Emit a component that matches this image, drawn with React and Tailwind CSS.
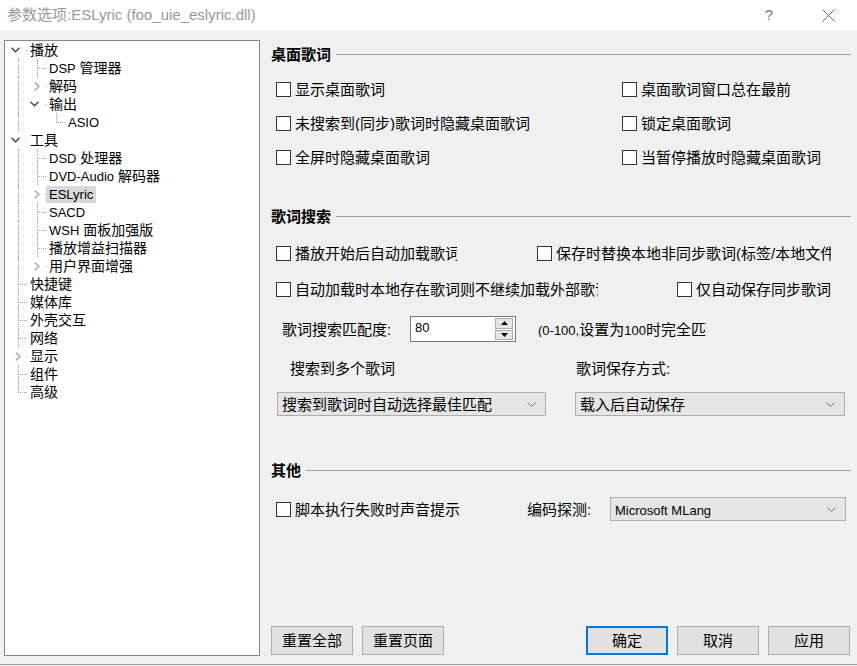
const L = ({ children }) => <span className="text-[13px]">{children}</span>;

const tree = [
  { label: '播放', level: 0, exp: 'open', anc: [], first: true },
  { label: <><L>DSP</L> 管理器</>, level: 1, anc: [true] },
  { label: '解码', level: 1, exp: 'closed', anc: [true] },
  { label: '输出', level: 1, exp: 'open', anc: [true], last: true },
  { label: <L>ASIO</L>, level: 2, anc: [true, false], last: true },
  { label: '工具', level: 0, exp: 'open', anc: [] },
  { label: <><L>DSD</L> 处理器</>, level: 1, anc: [true] },
  { label: <><L>DVD-Audio</L> 解码器</>, level: 1, anc: [true] },
  { label: <L>ESLyric</L>, level: 1, exp: 'closed', anc: [true], selected: true },
  { label: <L>SACD</L>, level: 1, anc: [true] },
  { label: <><L>WSH</L> 面板加强版</>, level: 1, anc: [true] },
  { label: '播放增益扫描器', level: 1, anc: [true] },
  { label: '用户界面增强', level: 1, exp: 'closed', anc: [true], last: true },
  { label: '快捷键', level: 0, anc: [] },
  { label: '媒体库', level: 0, anc: [] },
  { label: '外壳交互', level: 0, anc: [] },
  { label: '网络', level: 0, anc: [] },
  { label: '显示', level: 0, exp: 'closed', anc: [] },
  { label: '组件', level: 0, anc: [] },
  { label: '高级', level: 0, anc: [], last: true },
];

function TreeRow({ item }) {
  return (
    <div className="flex h-[18px] items-center">
      {item.anc.map((cont, i) => (
        <div key={i} className="relative h-full w-[19px] shrink-0">
          {cont && <div className="absolute left-[13px] top-0 h-full border-l border-dotted border-[#a0a0a0]" />}
        </div>
      ))}
      <div className="relative h-full w-[22px] shrink-0">
        {!item.first && <div className="absolute left-[13px] top-0 h-1/2 border-l border-dotted border-[#a0a0a0]" />}
        {!item.last && <div className="absolute left-[13px] top-1/2 h-1/2 border-l border-dotted border-[#a0a0a0]" />}
        <div className="absolute left-[13px] top-1/2 w-[9px] border-t border-dotted border-[#a0a0a0]" />
        {item.exp && (
          <div className="absolute left-[4px] top-0 flex h-full w-[16px] items-center justify-center bg-white">
            {item.exp === 'open' ? (
              <svg width="9" height="6" viewBox="0 0 9 6" className="-ml-[3px]">
                <polyline points="0.5,0.8 4.5,4.8 8.5,0.8" fill="none" stroke="#404040" strokeWidth="1.3" />
              </svg>
            ) : (
              <svg width="6" height="9" viewBox="0 0 6 9" className="ml-[2px]">
                <polyline points="0.8,0.5 4.8,4.5 0.8,8.5" fill="none" stroke="#a8a8a8" strokeWidth="1.5" />
              </svg>
            )}
          </div>
        )}
      </div>
      <div className={`flex h-[17px] items-center px-[3px] ${item.selected ? 'bg-[#d9d9d9]' : ''}`}>
        <span className="whitespace-pre text-[14px] leading-none text-black">{item.label}</span>
      </div>
    </div>
  );
}

function Section({ title }) {
  return (
    <div className="flex h-[18px] items-center">
      <span className="text-[15px] font-bold leading-none">{title}</span>
      <div className="ml-[5px] h-px flex-1 bg-[#a0a0a0]" />
    </div>
  );
}

function Check({ children, className = '' }) {
  return (
    <div className={`flex items-center overflow-hidden whitespace-nowrap ${className}`}>
      <div className="h-[15px] w-[15px] shrink-0 border border-[#333] bg-white" />
      <span className="ml-[4px] text-[15px] leading-none">{children}</span>
    </div>
  );
}

function Select({ className, children }) {
  return (
    <div className={`flex h-[24px] items-center border border-[#adadad] bg-[#e5e5e5] pl-[4px] pr-[9px] ${className}`}>
      <span className="flex-1 whitespace-nowrap text-[15px] leading-none">{children}</span>
      <svg width="9" height="5" viewBox="0 0 9 5">
        <polyline points="0.5,0.5 4.5,4.5 8.5,0.5" fill="none" stroke="#707070" strokeWidth="1" />
      </svg>
    </div>
  );
}

function Btn({ children, primary, className = '' }) {
  return (
    <div
      className={`flex h-[29px] w-[82px] items-center justify-center bg-[#e1e1e1] text-[15px] leading-none ${
        primary ? 'border-2 border-[#0078d7]' : 'border border-[#adadad]'
      } ${className}`}
    >
      {children}
    </div>
  );
}

export default function App() {
  return (
    <div className="flex h-[666px] w-[857px] flex-col overflow-hidden bg-[#f0f0f0] font-['Liberation_Sans','Noto_Sans_CJK_SC',sans-serif] text-black">
      <div className="flex h-[31px] shrink-0 items-center bg-white">
        <span className="pl-[7px] text-[15px] text-[#999]">参数选项:ESLyric (foo_uie_eslyric.dll)</span>
        <span className="ml-auto w-[20px] text-center text-[15px] text-[#777]">?</span>
        <div className="ml-[39px] mr-[19px] flex w-[20px] justify-center">
          <svg width="13" height="13" viewBox="0 0 13 13">
            <path d="M0.5 0.5 L12.5 12.5 M12.5 0.5 L0.5 12.5" stroke="#666" strokeWidth="1" />
          </svg>
        </div>
      </div>

      <div className="flex h-[633px] shrink-0">
        <div className="pl-[4px] pt-[9px]">
          <div className="h-[616px] w-[256px] border border-[#828790] bg-white">
            {tree.map((item, i) => (
              <TreeRow key={i} item={item} />
            ))}
          </div>
        </div>

        <div className="ml-[11px] flex w-[580px] flex-col pb-[9px]">
          <div className="mt-[14px]">
            <Section title="桌面歌词" />
          </div>
          <div className="mt-[16px] flex h-[20px] items-center pl-[5px]">
            <Check className="w-[346px]">显示桌面歌词</Check>
            <Check>桌面歌词窗口总在最前</Check>
          </div>
          <div className="mt-[14px] flex h-[20px] items-center pl-[5px]">
            <Check className="w-[346px]">未搜索到(同步)歌词时隐藏桌面歌词</Check>
            <Check>锁定桌面歌词</Check>
          </div>
          <div className="mt-[14px] flex h-[20px] items-center pl-[5px]">
            <Check className="w-[346px]">全屏时隐藏桌面歌词</Check>
            <Check>当暂停播放时隐藏桌面歌词</Check>
          </div>

          <div className="mt-[40px]">
            <Section title="歌词搜索" />
          </div>
          <div className="mt-[18px] flex h-[20px] items-center pl-[5px]">
            <div className="w-[261px]">
              <Check className="w-[181px]">播放开始后自动加载歌词</Check>
            </div>
            <Check className="w-[294px]">保存时替换本地非同步歌词(标签/本地文件)</Check>
          </div>
          <div className="mt-[16px] flex h-[20px] items-center pl-[5px]">
            <div className="w-[401px]">
              <Check className="w-[322px]">自动加载时本地存在歌词则不继续加载外部歌词</Check>
            </div>
            <Check>仅自动保存同步歌词</Check>
          </div>
          <div className="mt-[17px] flex h-[26px] items-center pl-[11px]">
            <span className="w-[128px] text-[15px] leading-none">歌词搜索匹配度:</span>
            <div className="flex h-[26px] w-[106px] items-stretch border border-[#7a7a7a] bg-white">
              <span className="flex-1 pl-[4px] pt-[4px] text-[13px] leading-none">80</span>
              <div className="my-[1px] mr-[2px] flex w-[18px] flex-col gap-px">
                <div className="flex flex-1 items-center justify-center border border-[#adadad] bg-[#e5e5e5]">
                  <svg width="7" height="4" viewBox="0 0 7 4"><polygon points="0,4 3.5,0 7,4" fill="#000" /></svg>
                </div>
                <div className="flex flex-1 items-center justify-center border border-[#adadad] bg-[#e5e5e5]">
                  <svg width="7" height="4" viewBox="0 0 7 4"><polygon points="0,0 3.5,4 7,0" fill="#000" /></svg>
                </div>
              </div>
            </div>
            <span className="ml-[22px] w-[169px] overflow-hidden whitespace-nowrap text-[15px] leading-none">
              <L>(0-100,</L>设置为<L>100</L>时完全匹配
            </span>
          </div>
          <div className="mt-[17px] flex h-[18px] items-center pl-[19px] text-[15px] leading-none">
            <span className="w-[286px]">搜索到多个歌词</span>
            <span>歌词保存方式:</span>
          </div>
          <div className="mt-[15px] flex items-center pl-[6px]">
            <Select className="w-[269px]">搜索到歌词时自动选择最佳匹配</Select>
            <Select className="ml-[29px] w-[270px]">载入后自动保存</Select>
          </div>

          <div className="mt-[45px]">
            <Section title="其他" />
          </div>
          <div className="mt-[18px] flex h-[24px] items-center pl-[5px]">
            <Check className="w-[251px]">脚本执行失败时声音提示</Check>
            <span className="w-[83px] text-[15px] leading-none">编码探测:</span>
            <Select className="w-[236px]">
              <L>Microsoft MLang</L>
            </Select>
          </div>

          <div className="mt-auto flex">
            <Btn>重置全部</Btn>
            <Btn className="ml-[9px]">重置页面</Btn>
            <Btn primary className="ml-[142px]">确定</Btn>
            <Btn className="ml-[9px]">取消</Btn>
            <Btn className="ml-[9px]">应用</Btn>
          </div>
        </div>
      </div>
      <div className="h-[2px] shrink-0 border-t border-[#a0a0a0]" />
    </div>
  );
}
